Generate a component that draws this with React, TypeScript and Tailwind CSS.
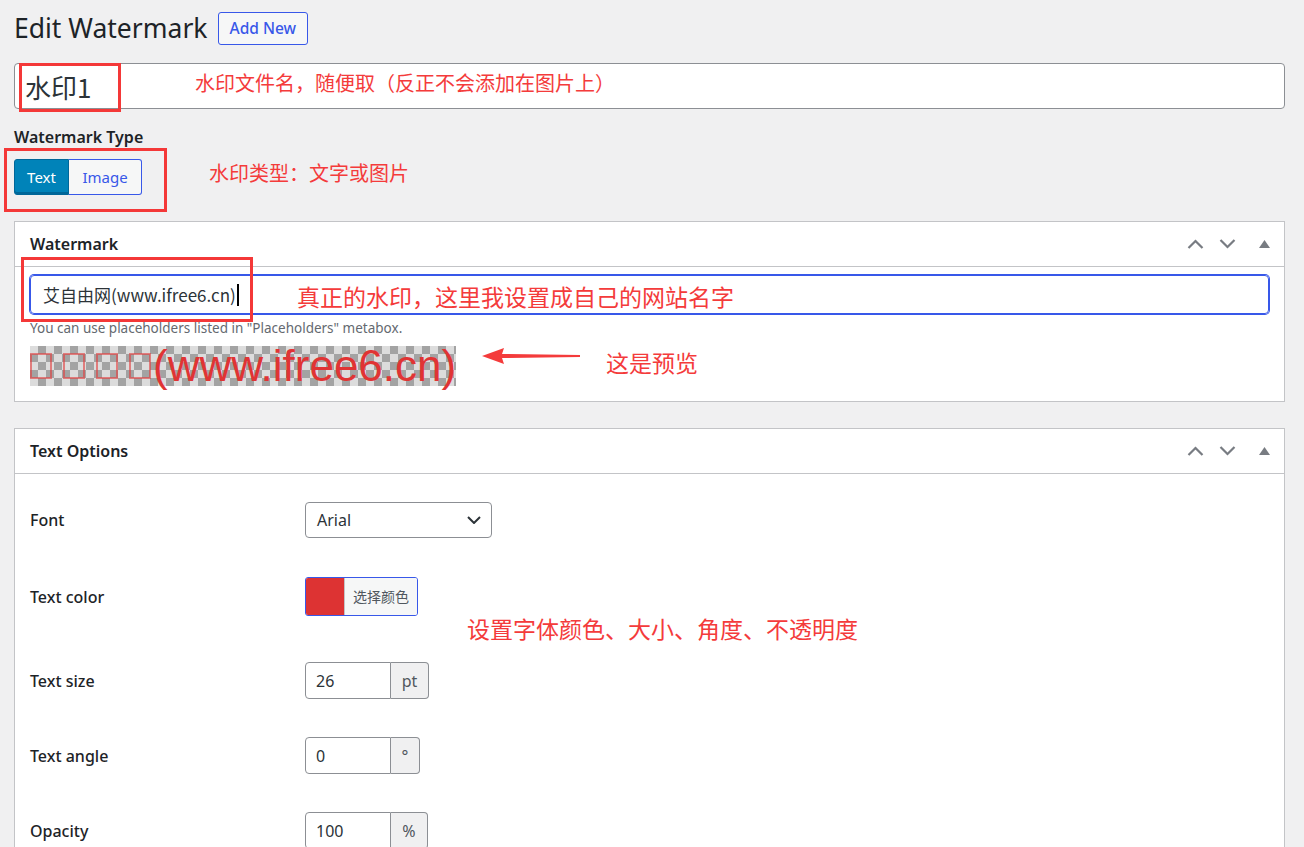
import React from 'react'

const SANS = 'font-["Noto_Sans","Noto_Sans_CJK_SC",sans-serif]'
const CJK = 'font-["Noto_Sans_CJK_SC","Noto_Sans",sans-serif]'

function ChevronUp() {
  return (
    <svg width="17" height="10" viewBox="0 0 17 10" fill="none">
      <path d="M1.5 9 L8.5 2 L15.5 9" stroke="#787c82" strokeWidth="2.2" />
    </svg>
  )
}

function ChevronDown() {
  return (
    <svg width="17" height="10" viewBox="0 0 17 10" fill="none">
      <path d="M1.5 1 L8.5 8 L15.5 1" stroke="#787c82" strokeWidth="2.2" />
    </svg>
  )
}

function PanelHeader({ title }: { title: string }) {
  return (
    <div className="flex h-[45px] items-center justify-between border-b border-[#c3c4c7] pl-[15px] pr-[14px]">
      <h2 className="text-[16px] font-semibold text-[#1d2327]">{title}</h2>
      <div className="flex items-center">
        <ChevronUp />
        <span className="ml-[15px]">
          <ChevronDown />
        </span>
        <svg className="ml-[23px]" width="11" height="8" viewBox="0 0 11 8">
          <path d="M5.5 0 L11 8 L0 8 Z" fill="#787c82" />
        </svg>
      </div>
    </div>
  )
}

function Row({ label, className, children }: { label: string; className: string; children: React.ReactNode }) {
  return (
    <div className={`flex items-center ${className}`}>
      <div className="w-[275px] text-[16px] font-medium text-[#1d2327]">{label}</div>
      {children}
    </div>
  )
}

function NumberField({ value, unit, unitWidth }: { value: string; unit: string; unitWidth: string }) {
  return (
    <div className="flex h-[37px]">
      <div className="flex w-[86px] items-center rounded-l-[4px] border border-[#8c8f94] bg-white pl-[10px] text-[16px] text-[#2c3338]">
        {value}
      </div>
      <div
        className={`flex ${unitWidth} items-center justify-center rounded-r-[4px] border border-l-0 border-[#8c8f94] bg-[#f0f0f1] text-[16px] text-[#50575e]`}
      >
        {unit}
      </div>
    </div>
  )
}

function Tofu() {
  return <span className="mr-[11px] inline-block h-[26px] w-[22px] border-2 border-[rgba(226,60,60,0.6)]" />
}

export default function App() {
  return (
    <div className={`relative h-[847px] overflow-hidden bg-[#f0f0f1] pl-[14px] pr-[19px] pt-[12px] ${SANS}`}>
      {/* heading */}
      <div className="flex h-[33px] items-center gap-[10px]">
        <h1 className="text-[26.5px] leading-none font-normal text-[#1d2327]">Edit Watermark</h1>
        <button className="h-[33px] rounded-[3px] border border-[#3858e9] bg-[#f6f7f7] px-[11px] text-[15.5px] font-medium text-[#3858e9]">
          Add New
        </button>
      </div>

      {/* title */}
      <div className={`mt-[18px] flex h-[46px] items-center rounded-[4px] border border-[#8c8f94] bg-white pl-[10px] text-[26px] text-[#2c3338] ${CJK}`}>
        水印1
      </div>

      {/* type */}
      <div className="mt-[16px] text-[16px] leading-[24px] font-semibold text-[#1d2327]">Watermark Type</div>
      <div className="mt-[10px] flex h-[36px]">
        <button className="w-[55px] rounded-l-[3px] border border-[#006799] bg-[#0083b9] text-[15px] text-white shadow-[inset_0_-2px_0_#006799]">
          Text
        </button>
        <button className="w-[73px] rounded-r-[3px] border border-l-0 border-[#3858e9] bg-[#f6f7f7] text-[15px] text-[#3858e9]">
          Image
        </button>
      </div>

      {/* watermark panel */}
      <div className="mt-[26px] border border-[#c3c4c7] bg-white">
        <PanelHeader title="Watermark" />
        <div className="px-[15px] pt-[8px] pb-[15px]">
          <div className={`flex h-[39px] items-center rounded-[4px] border border-[#3858e9] pl-[12px] text-[17px] text-[#2c3338] shadow-[0_0_0_1px_#3858e9] ${CJK}`}>
            艾自由网(www.ifree6.cn)
            <span className="ml-[1px] h-[22px] w-[2px] bg-black" />
          </div>
          <p className="mt-[4px] text-[13.5px] leading-[20px] text-[#646970]">
            You can use placeholders listed in "Placeholders" metabox.
          </p>
          <div className='mt-[8px] inline-flex h-[40px] items-center bg-[conic-gradient(#a3a3a3_25%,#dcdcdc_0_50%,#a3a3a3_0_75%,#dcdcdc_0)] bg-[length:16px_16px] font-["Liberation_Sans",Arial,sans-serif] text-[44px] leading-[40px] text-[#e03434]'>
            <Tofu />
            <Tofu />
            <Tofu />
            <Tofu />
            <span className="-ml-[9px]">(www.ifree6.cn)</span>
          </div>
        </div>
      </div>

      {/* text options panel */}
      <div className="mt-[26px] border border-[#c3c4c7] bg-white pb-[40px]">
        <PanelHeader title="Text Options" />
        <div className="px-[15px] pt-[28px]">
          <Row label="Font" className="h-[36px]">
            <div className="flex h-[36px] w-[187px] items-center justify-between rounded-[4px] border border-[#8c8f94] bg-white pl-[11px] pr-[10px] text-[16px] text-[#2c3338]">
              Arial
              <svg width="14" height="8" viewBox="0 0 14 8" fill="none">
                <path d="M1 1 L7 7 L13 1" stroke="#2c3338" strokeWidth="2" />
              </svg>
            </div>
          </Row>
          <Row label="Text color" className="mt-[39px] h-[39px]">
            <div className="flex h-[39px] overflow-hidden rounded-[3px] border border-[#3858e9]">
              <div className="w-[38px] bg-[#dd3333]" />
              <div className={`flex items-center border-l border-[#c3c4c7] bg-[#f6f7f7] px-[8px] text-[14px] text-[#50575e] ${CJK}`}>
                选择颜色
              </div>
            </div>
          </Row>
          <Row label="Text size" className="mt-[46px] h-[37px]">
            <NumberField value="26" unit="pt" unitWidth="w-[38px]" />
          </Row>
          <Row label="Text angle" className="mt-[38px] h-[37px]">
            <NumberField value="0" unit="°" unitWidth="w-[29px]" />
          </Row>
          <Row label="Opacity" className="mt-[38px] h-[37px]">
            <NumberField value="100" unit="%" unitWidth="w-[37px]" />
          </Row>
        </div>
      </div>

      {/* annotations */}
      <div className="pointer-events-none absolute left-[19px] top-[63px] h-[49px] w-[102px] border-[3px] border-[#f43838]" />
      <div className="pointer-events-none absolute left-[4px] top-[148px] h-[64px] w-[163px] border-[3px] border-[#f43838]" />
      <div className="pointer-events-none absolute left-[21px] top-[257px] h-[65px] w-[232px] border-[3px] border-[#f43838]" />

      <div className={`absolute left-[195px] top-[70px] text-[20px] leading-[26px] text-[#f43b3b] ${CJK}`}>
        水印文件名，随便取（反正不会添加在图片上）
      </div>
      <div className={`absolute left-[209px] top-[160px] text-[20px] leading-[26px] text-[#f43b3b] ${CJK}`}>
        水印类型：文字或图片
      </div>
      <div className={`absolute left-[297px] top-[281px] text-[23px] leading-[30px] text-[#f43b3b] ${CJK}`}>
        真正的水印，这里我设置成自己的网站名字
      </div>
      <svg className="absolute left-[482px] top-[347px]" width="100" height="18" viewBox="0 0 100 18">
        <path d="M0 9 L22 1 L20 7 L98 8 L98 10 L20 11 L22 17 Z" fill="#f43b3b" />
      </svg>
      <div className={`absolute left-[606px] top-[347px] text-[23px] leading-[30px] text-[#f43b3b] ${CJK}`}>
        这是预览
      </div>
      <div className={`absolute left-[467px] top-[613px] text-[23px] leading-[30px] text-[#f43b3b] ${CJK}`}>
        设置字体颜色、大小、角度、不透明度
      </div>
    </div>
  )
}
